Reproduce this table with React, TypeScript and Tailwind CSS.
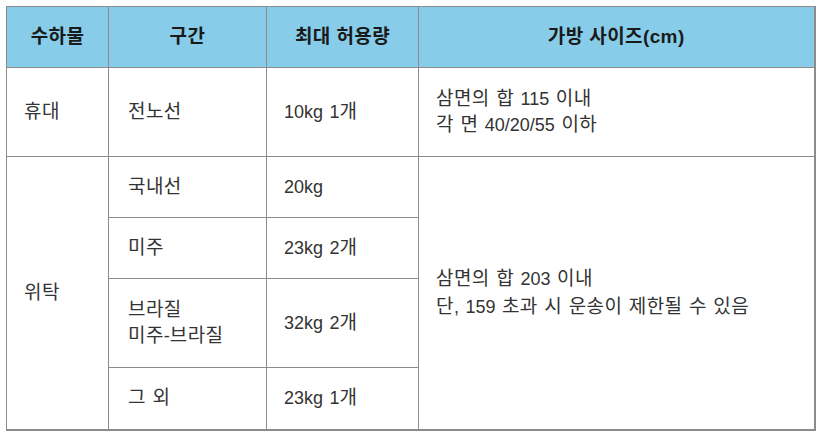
import React from "react";

const font = { fontFamily: '"Liberation Sans", "Noto Sans CJK KR", sans-serif' };

function K({ text }: { text: string }) {
  const parts = text.split(/([가-힣]+)/);
  return (
    <>
      {parts.map((p, i) =>
        /[가-힣]/.test(p) ? (
          <span key={i} className="text-[19px] tracking-[0.4px]">
            {p}
          </span>
        ) : (
          <span key={i}>{p}</span>
        )
      )}
    </>
  );
}

export default function App() {
  const th = "border border-[#8c8c8c] bg-[#87cdea] text-center font-bold text-[19px] tracking-[0.4px] text-[#1a1a1a] h-[61px] p-0";
  const td = "border border-[#8c8c8c] pl-[17px] pr-2 text-[18px] leading-[26px] [word-spacing:1.5px] text-[#333] align-middle p-0";
  return (
    <div className="w-[823px] h-[444px] bg-white pt-[6px] pl-[6px]" style={font}>
      <table className="border-collapse table-fixed w-[808px] border-r-2 border-b-2 border-[#8c8c8c]">
        <colgroup>
          <col className="w-[102px]" />
          <col className="w-[158px]" />
          <col className="w-[152px]" />
          <col className="w-[396px]" />
        </colgroup>
        <thead>
          <tr>
            <th className={th}>수하물</th>
            <th className={th}>구간</th>
            <th className={th}>최대 허용량</th>
            <th className={th}>가방 사이즈(cm)</th>
          </tr>
        </thead>
        <tbody>
          <tr className="h-[89px]">
            <td className={td}><K text="휴대" /></td>
            <td className={td + " pl-[19px]"}><K text="전노선" /></td>
            <td className={td}><K text="10kg 1개" /></td>
            <td className={td + " leading-[25px]"}>
              <K text="삼면의 합 115 이내" />
              <br />
              <K text="각 면 40/20/55 이하" />
            </td>
          </tr>
          <tr className="h-[61px]">
            <td className={td} rowSpan={4}><K text="위탁" /></td>
            <td className={td + " pl-[19px]"}><K text="국내선" /></td>
            <td className={td}><K text="20kg" /></td>
            <td className={td + " leading-[28px]"} rowSpan={4}>
              <K text="삼면의 합 203 이내" />
              <br />
              <K text="단, 159 초과 시 운송이 제한될 수 있음" />
            </td>
          </tr>
          <tr className="h-[61px]">
            <td className={td + " pl-[19px]"}><K text="미주" /></td>
            <td className={td}><K text="23kg 2개" /></td>
          </tr>
          <tr className="h-[89px]">
            <td className={td + " pl-[19px]"}>
              <K text="브라질" />
              <br />
              <K text="미주-브라질" />
            </td>
            <td className={td}><K text="32kg 2개" /></td>
          </tr>
          <tr className="h-[62px]">
            <td className={td + " pl-[19px]"}><K text="그 외" /></td>
            <td className={td}><K text="23kg 1개" /></td>
          </tr>
        </tbody>
      </table>
    </div>
  );
}
